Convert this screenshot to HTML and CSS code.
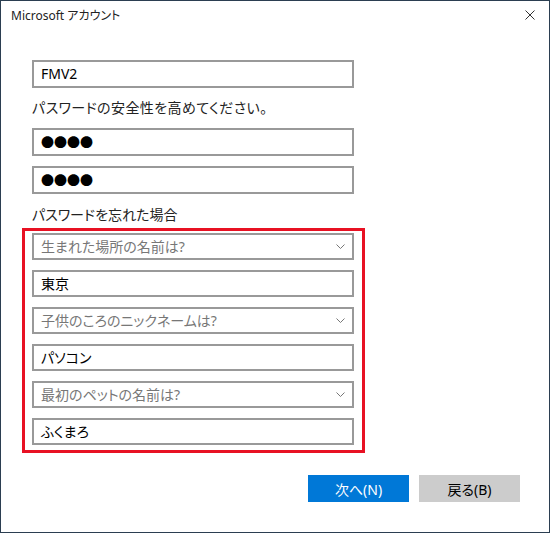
FILE: index.html
```html
<!DOCTYPE html>
<html lang="ja">
<head>
<meta charset="utf-8">
<title>Microsoft アカウント</title>
<link rel="stylesheet" href="styles.css">
</head>
<body>
<div class="window">
  <div class="titlebar">
    <span class="title">Microsoft アカウント</span>
    <svg class="close" width="10" height="10" viewBox="0 0 10 10"><path d="M0.5 0.5 L9.5 9.5 M9.5 0.5 L0.5 9.5" stroke="#333" stroke-width="1" fill="none"/></svg>
  </div>
  <div class="content">
    <div class="field"><span>FMV2</span></div>
    <p class="label">パスワードの安全性を高めてください。</p>
    <div class="field gap"><span class="dots">●●●●</span></div>
    <div class="field"><span class="dots">●●●●</span></div>
    <p class="label label2">パスワードを忘れた場合</p>
    <div class="highlight">
      <div class="field small select"><span>生まれた場所の名前は?</span><svg class="chev" width="9" height="5" viewBox="0 0 9 5"><path d="M0.5 0.5 L4.5 4.5 L8.5 0.5" stroke="#777" stroke-width="1" fill="none"/></svg></div>
      <div class="field small"><span>東京</span></div>
      <div class="field small select"><span>子供のころのニックネームは?</span><svg class="chev" width="9" height="5" viewBox="0 0 9 5"><path d="M0.5 0.5 L4.5 4.5 L8.5 0.5" stroke="#777" stroke-width="1" fill="none"/></svg></div>
      <div class="field small"><span>パソコン</span></div>
      <div class="field small select"><span>最初のペットの名前は?</span><svg class="chev" width="9" height="5" viewBox="0 0 9 5"><path d="M0.5 0.5 L4.5 4.5 L8.5 0.5" stroke="#777" stroke-width="1" fill="none"/></svg></div>
      <div class="field small"><span>ふくまろ</span></div>
    </div>
  </div>
  <div class="actions">
    <button class="btn primary">次へ(N)</button>
    <button class="btn">戻る(B)</button>
  </div>
</div>
</body>
</html>
```

FILE: styles.css
```css
* { box-sizing: border-box; }
html, body { margin: 0; padding: 0; background: #fff; }
body {
  font-family: "Noto Sans", "Noto Sans CJK JP", sans-serif;
  font-feature-settings: "palt";
  color: #000;
}
.window {
  width: 550px;
  height: 533px;
  border: 1px solid #2b3e51;
  display: flex;
  flex-direction: column;
  background: #fff;
}
.titlebar {
  height: 27px;
  display: flex;
  align-items: center;
  justify-content: space-between;
  padding: 0 14px 0 10px;
}
.title {
  font-size: 12px;
  color: #222;
}
.close { display: block; }
.content {
  margin-top: 32px;
  padding-left: 31px;
  display: flex;
  flex-direction: column;
}
.field {
  width: 322px;
  height: 28px;
  border: 2px solid #999;
  padding: 0 7px;
  display: flex;
  align-items: center;
  justify-content: space-between;
  font-size: 14px;
  line-height: 20px;
}
.field.gap { margin-bottom: 10px; }
.dots {
  font-family: "Noto Sans CJK JP", sans-serif;
  font-size: 13px;
  letter-spacing: 0;
  font-feature-settings: normal;
}
.label {
  margin: 10px 0;
  font-size: 14px;
  line-height: 20px;
  color: #222;
  letter-spacing: 0.4px;
}
.label2 { margin: 11px 0 3px; letter-spacing: 0; }
.highlight {
  width: 343px;
  margin-left: -10px;
  border: 3px solid #e81123;
  padding: 2px 8px 5px 7px;
  display: flex;
  flex-direction: column;
  gap: 10px;
}
.field.small { height: 27px; }
.field.select { color: #777; }
.chev { display: block; margin-right: 0; }
.actions {
  margin-top: 22px;
  display: flex;
  justify-content: flex-end;
  gap: 10px;
  padding-right: 29px;
}
.btn {
  width: 101px;
  height: 27px;
  border: none;
  background: #cccccc;
  color: #000;
  font-family: "Noto Sans", "Noto Sans CJK JP", sans-serif;
  font-feature-settings: "palt";
  font-size: 14px;
  padding: 0;
}
.btn.primary { background: #0078d7; color: #fff; }
```
